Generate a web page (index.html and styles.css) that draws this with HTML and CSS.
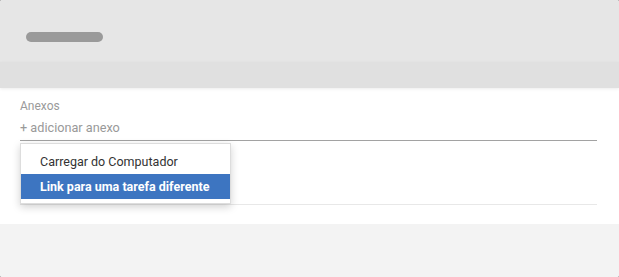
FILE: index.html
```html
<!DOCTYPE html>
<html>
<head>
  <meta charset="UTF-8">
  <title>Anexos</title>
  <link rel="stylesheet" href="styles.css">
</head>

<body>
  <div class="modal">
    <div class="modal-header"><span class="pill"></span></div>
    <div class="modal-tabs"></div>

    <div class="modal-body">
      <div class="field-label">Anexos</div>
      <div class="field-add">+ adicionar anexo</div>
      <!-- dropdown opened from the add link -->
      <ul class="dropdown">
        <li>Carregar do Computador</li>
        <li class="active">Link para uma tarefa diferente</li>
      </ul>
      <div class="field-empty"></div>
    </div>

    <div class="modal-footer"></div>
  </div>
</body>
</html>
```

FILE: styles.css
```css
/****************
 * page + modal *
 ****************/
html, body { margin: 0; padding: 0; background: #777; }

.modal {
  width: 619px;
  height: 277px;
  background: #fff;
  border-radius: 2px;
  overflow: hidden;
  font-family: Roboto, "Liberation Sans", Arial, sans-serif;
  display: flex;
  flex-direction: column;
}

.modal-header {
  height: 62px;
  background: #e6e6e6;
  padding: 32px 0 0 26px;
  box-sizing: border-box;
}
.pill {
  display: block;
  width: 77px;
  height: 10px;
  border-radius: 5px;
  background: #9a9a9a;
}

.modal-tabs {
  height: 26px;
  background: #e0e0e0;
  box-shadow: 0 1px 3px rgba(0,0,0,.08);
  position: relative;
  z-index: 1;
}

/********
 * body *
 ********/
.modal-body {
  position: relative;   /* dropdown is placed against this */
  padding: 9px 22px 19px 20px;
}

.field-label {
  font-size: 12px;
  line-height: 16px;
  padding-top: 1px;
  color: #9a9a9a;
}

.field-add {
  font-size: 12.7px;
  line-height: 18px;
  color: #999;
  padding: 5px 0 3px;
  border-bottom: 1px solid #a2a2a2;
}

.field-empty {
  height: 63px;
  border-bottom: 1px solid #e8e8e8;
}

/* dropdown menu */
.dropdown {
  position: absolute;
  top: 55px;
  left: 20px;
  width: 209px;
  margin: 0;
  padding: 5px 0 4px;
  list-style: none;
  background: #fff;
  border: 1px solid #ddd;
  box-shadow: 0 3px 8px rgba(0,0,0,.18);
  z-index: 2;
}
.dropdown li {
  font-size: 12.5px;
  line-height: 25px;
  padding-left: 19px;
  color: #333;
}
.dropdown li.active {
  background: #3d75c1;
  color: #fff;
  font-weight: bold;
}

.modal-footer {
  flex: 1;
  background: #f3f3f3;
}
```
